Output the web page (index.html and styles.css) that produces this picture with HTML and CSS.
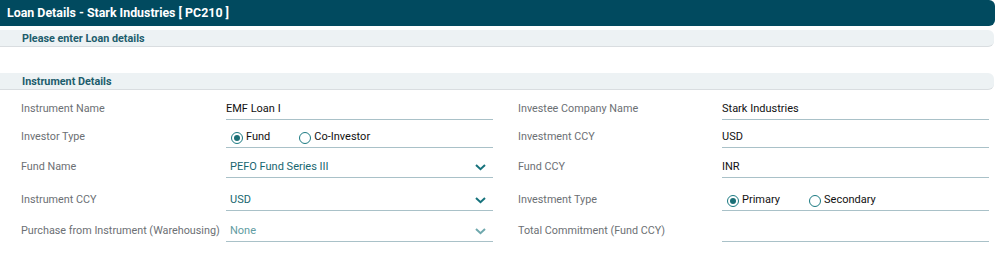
FILE: index.html
```html
<!DOCTYPE html>
<html lang="en">
<head>
    <meta charset="UTF-8">
    <meta name="viewport" content="width=device-width, initial-scale=1.0">
    <title>Loan Details</title>
    <link rel="stylesheet" href="styles.css">
</head>
<body>
    <div class="page-title">Loan Details - Stark Industries [ PC210 ]</div>

    <div class="section-bar first">Please enter Loan details</div>
    <div class="section-bar">Instrument Details</div>

    <div class="form">
        <div class="row r1">
            <div class="field">
                <label>Instrument Name</label>
                <div class="control text">EMF Loan I</div>
            </div>
            <div class="field">
                <label>Investee Company Name</label>
                <div class="control text">Stark Industries</div>
            </div>
        </div>

        <div class="row r2">
            <div class="field">
                <label>Investor Type</label>
                <div class="control radios">
                    <span class="radio checked"></span><span class="opt">Fund</span>
                    <span class="radio"></span><span class="opt">Co-Investor</span>
                </div>
            </div>
            <div class="field">
                <label>Investment CCY</label>
                <div class="control text">USD</div>
            </div>
        </div>

        <div class="row r3">
            <div class="field">
                <label>Fund Name</label>
                <div class="control select">
                    <span>PEFO Fund Series III</span>
                    <svg class="chevron" width="11" height="7" viewBox="0 0 11 7"><path d="M1 1 L5.5 5.2 L10 1" fill="none" stroke="#16727c" stroke-width="2"/></svg>
                </div>
            </div>
            <div class="field">
                <label>Fund CCY</label>
                <div class="control text">INR</div>
            </div>
        </div>

        <div class="row r4">
            <div class="field">
                <label>Instrument CCY</label>
                <div class="control select">
                    <span>USD</span>
                    <svg class="chevron" width="11" height="7" viewBox="0 0 11 7"><path d="M1 1 L5.5 5.2 L10 1" fill="none" stroke="#16727c" stroke-width="2"/></svg>
                </div>
            </div>
            <div class="field">
                <label>Investment Type</label>
                <div class="control radios">
                    <span class="radio checked"></span><span class="opt">Primary</span>
                    <span class="radio"></span><span class="opt">Secondary</span>
                </div>
            </div>
        </div>

        <div class="row r5">
            <div class="field">
                <label>Purchase from Instrument (Warehousing)</label>
                <div class="control select placeholder">
                    <span>None</span>
                    <svg class="chevron" width="11" height="7" viewBox="0 0 11 7"><path d="M1 1 L5.5 5.2 L10 1" fill="none" stroke="#6fa8ad" stroke-width="2"/></svg>
                </div>
            </div>
            <div class="field">
                <label>Total Commitment (Fund CCY)</label>
                <div class="control text"></div>
            </div>
        </div>
    </div>
</body>
</html>
```

FILE: styles.css
```css
body {
    margin: 0;
    font-family: Roboto, 'Liberation Sans', sans-serif;
    font-size: 11px;
    background-color: white;
}

.page-title {
    width: 995px;
    height: 26px;
    line-height: 26px;
    padding-left: 7px;
    box-sizing: border-box;
    background-color: #014a5f;
    color: white;
    font-weight: bold;
    font-size: 12.4px;
    border-radius: 0 6px 6px 0;
}

.section-bar {
    width: 994px;
    height: 17px;
    line-height: 17px;
    padding-left: 22px;
    box-sizing: border-box;
    background-color: #edf2f4;
    border-bottom: 1px solid #d9dde0;
    border-radius: 0 6px 6px 0;
    color: #1d5d6c;
    font-weight: bold;
    font-size: 10.8px;
    margin-top: 26px;
}

.section-bar.first {
    margin-top: 4px;
}

.form {
    padding-top: 2px;
}

.row {
    display: flex;
    align-items: flex-end;
}

.r1 { height: 28px; }
.r2 { height: 28px; }
.r3 { height: 30px; }
.r4 { height: 33px; }
.r5 { height: 31px; }

.field {
    display: flex;
    align-items: flex-end;
}

.field:first-child {
    padding-left: 21px;
    width: 472px;
}

.field:last-child {
    padding-left: 25px;
}

.field label {
    width: 205px;
    height: 23px;
    line-height: 24px;
    font-size: 10.8px;
    color: #6c7074;
}

.field:last-child label {
    width: 204px;
}

.control {
    width: 267px;
    height: 22px;
    line-height: 23px;
    border-bottom: 1px solid #a9c1c8;
    color: #111;
    display: flex;
    align-items: center;
}

.select {
    padding: 0 7px 0 4px;
    box-sizing: content-box;
    width: 256px;
    justify-content: space-between;
    color: #17666f;
}

.select .chevron {
    margin-top: 3px;
}

.placeholder {
    color: #5f9ca2;
}

.radios {
    padding-left: 5px;
    width: 262px;
}

.radio {
    width: 10px;
    height: 10px;
    border: 1.5px solid #1b7a82;
    border-radius: 50%;
    margin-top: 3px;
    margin-right: 3px;
    position: relative;
}

.radio.checked::after {
    content: "";
    position: absolute;
    left: 2px;
    top: 2px;
    width: 6px;
    height: 6px;
    border-radius: 50%;
    background-color: #1b6f76;
}

.opt {
    margin-right: 29px;
}
```
